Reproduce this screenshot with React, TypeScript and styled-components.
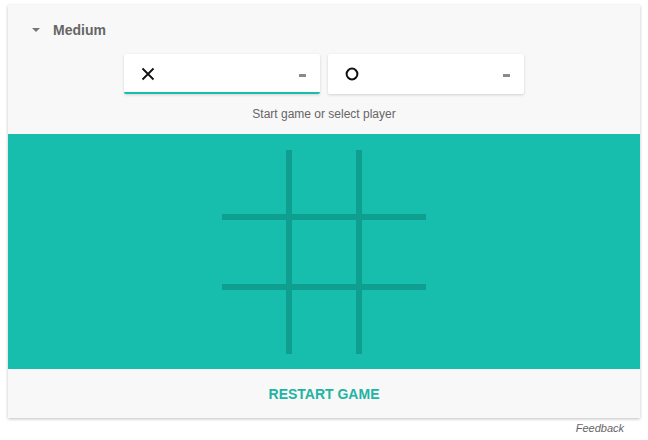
import styled, { createGlobalStyle } from 'styled-components';

const COLORS = {
  teal: '#17bead',
  tealDark: '#0f9f90',
  tealText: '#22b3a3',
  cardBg: '#f8f8f8',
  gray: '#666666',
};

const GlobalStyle = createGlobalStyle`
  body {
    margin: 0;
    background: #ffffff;
    font-family: 'Liberation Sans', Arial, sans-serif;
  }
`;

const players = [
  { id: 'x', active: true },
  { id: 'o', active: false },
];

function XIcon() {
  return (
    <svg width="14" height="14" viewBox="0 0 14 14">
      <path d="M1.5 1.5 L12.5 12.5 M12.5 1.5 L1.5 12.5" stroke="#111" strokeWidth="1.8" />
    </svg>
  );
}

function OIcon() {
  return (
    <svg width="14" height="14" viewBox="0 0 14 14">
      <circle cx="7" cy="7" r="5.4" fill="none" stroke="#111" strokeWidth="2" />
    </svg>
  );
}

function App() {
  return (
    <>
      <GlobalStyle />
      <Page>
        <Card>
          <Header>
            <Caret />
            <Level>Medium</Level>
          </Header>
          <PlayerRow>
            {players.map((p) => (
              <PlayerButton key={p.id} active={p.active}>
                <Mark>{p.id === 'x' ? <XIcon /> : <OIcon />}</Mark>
                <Score aria-label="no score" />
              </PlayerButton>
            ))}
          </PlayerRow>
          <Status>Start game or select player</Status>
          <Board>
            <Grid>
              {Array.from({ length: 9 }).map((_, i) => (
                <Cell key={i} />
              ))}
            </Grid>
          </Board>
          <Footer>
            <RestartButton>RESTART GAME</RestartButton>
          </Footer>
        </Card>
        <Feedback>Feedback</Feedback>
      </Page>
    </>
  );
}

const Page = styled.div`
  padding: 5px 8px 0 8px;
`;

const Card = styled.section`
  width: 632px;
  background: ${COLORS.cardBg};
  box-shadow: 0 1px 3px rgba(0, 0, 0, 0.25);
  display: flex;
  flex-direction: column;
`;

const Header = styled.div`
  display: flex;
  align-items: center;
  gap: 13px;
  padding: 16px 0 0 24px;
  height: 18px;
`;

const Caret = styled.span`
  width: 0;
  height: 0;
  border-left: 4px solid transparent;
  border-right: 4px solid transparent;
  border-top: 4px solid #777;
`;

const Level = styled.span`
  font-size: 14px;
  font-weight: 700;
  color: ${COLORS.gray};
  line-height: 18px;
`;

const PlayerRow = styled.div`
  display: flex;
  justify-content: center;
  gap: 8px;
  margin-top: 15px;
`;

const PlayerButton = styled.div.withConfig({
  shouldForwardProp: (prop) => prop !== 'active',
})<{ active?: boolean }>`
  box-sizing: border-box;
  width: 196px;
  height: 40px;
  background: #ffffff;
  border-radius: 2px;
  box-shadow: 0 1px 3px rgba(0, 0, 0, 0.16);
  border-bottom: 2px solid ${(p) => (p.active ? COLORS.teal : 'transparent')};
  display: flex;
  align-items: center;
  justify-content: space-between;
  padding: 2px 14px 0 17px;
`;

const Mark = styled.span`
  display: flex;
`;

const Score = styled.span`
  width: 7px;
  height: 3px;
  background: #8a8a8a;
  margin-top: 2px;
`;

const Status = styled.p`
  margin: 12px 0 12px;
  text-align: center;
  font-size: 12px;
  line-height: 16px;
  color: ${COLORS.gray};
`;

const Board = styled.div`
  height: 235px;
  background: ${COLORS.teal};
  display: flex;
  align-items: center;
  justify-content: center;
`;

const Grid = styled.div`
  display: grid;
  grid-template-columns: repeat(3, 64px);
  grid-template-rows: repeat(3, 64px);
  gap: 6px;
  background: ${COLORS.tealDark};
  margin-top: 1px;
`;

const Cell = styled.div`
  background: ${COLORS.teal};
`;

const Footer = styled.div`
  height: 49px;
  display: flex;
  align-items: center;
  justify-content: center;
`;

const RestartButton = styled.button`
  border: none;
  background: none;
  padding: 0;
  font-family: 'Liberation Sans', Arial, sans-serif;
  font-size: 14px;
  font-weight: 700;
  color: ${COLORS.tealText};
  cursor: pointer;
`;

const Feedback = styled.div`
  width: 616px;
  text-align: right;
  font-size: 11px;
  font-style: italic;
  color: #666;
  margin-top: 4px;
`;

export default App;
